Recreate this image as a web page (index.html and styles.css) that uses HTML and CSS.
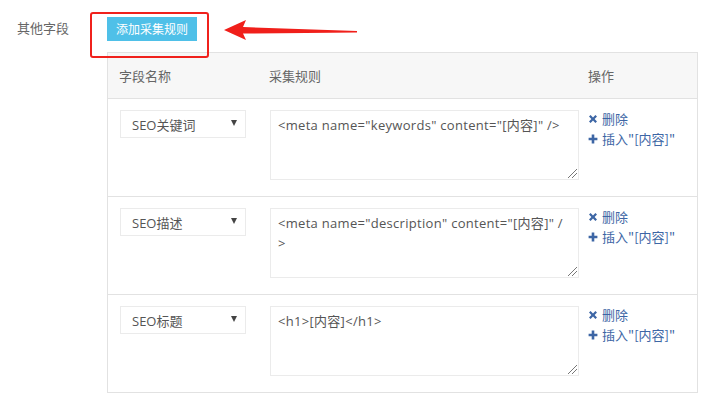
FILE: index.html
```html
<!DOCTYPE html>
<html>
<head>
<meta charset="utf-8">
<link rel="stylesheet" href="styles.css">
</head>
<body>
<div class="form-row">
  <div class="label">其他字段</div>
  <div class="field">
    <div class="btn-line">
      <button class="btn-add">添加采集规则</button>
    </div>
    <div class="rules">
      <div class="row head">
        <div class="cell c1">字段名称</div>
        <div class="cell c2">采集规则</div>
        <div class="cell c3">操作</div>
      </div>
      <div class="row">
        <div class="cell c1"><div class="select"><span>SEO关键词</span><i class="caret"></i></div></div>
        <div class="cell c2"><div class="ta">&lt;meta name="keywords" content="[内容]" /&gt;<i class="grip"></i></div></div>
        <div class="cell c3">
          <a class="act"><svg viewBox="0 0 10 10" class="ic"><path d="M1 2.6 L2.6 1 L5 3.4 L7.4 1 L9 2.6 L6.6 5 L9 7.4 L7.4 9 L5 6.6 L2.6 9 L1 7.4 L3.4 5 Z"/></svg>删除</a>
          <a class="act"><svg viewBox="0 0 10 10" class="ic"><path d="M3.7 0.6 H6.3 V3.7 H9.4 V6.3 H6.3 V9.4 H3.7 V6.3 H0.6 V3.7 H3.7 Z"/></svg>插入"[内容]"</a>
        </div>
      </div>
      <div class="row">
        <div class="cell c1"><div class="select"><span>SEO描述</span><i class="caret"></i></div></div>
        <div class="cell c2"><div class="ta">&lt;meta name="description" content="[内容]" /<br>&gt;<i class="grip"></i></div></div>
        <div class="cell c3">
          <a class="act"><svg viewBox="0 0 10 10" class="ic"><path d="M1 2.6 L2.6 1 L5 3.4 L7.4 1 L9 2.6 L6.6 5 L9 7.4 L7.4 9 L5 6.6 L2.6 9 L1 7.4 L3.4 5 Z"/></svg>删除</a>
          <a class="act"><svg viewBox="0 0 10 10" class="ic"><path d="M3.7 0.6 H6.3 V3.7 H9.4 V6.3 H6.3 V9.4 H3.7 V6.3 H0.6 V3.7 H3.7 Z"/></svg>插入"[内容]"</a>
        </div>
      </div>
      <div class="row">
        <div class="cell c1"><div class="select"><span>SEO标题</span><i class="caret"></i></div></div>
        <div class="cell c2"><div class="ta">&lt;h1&gt;[内容]&lt;/h1&gt;<i class="grip"></i></div></div>
        <div class="cell c3">
          <a class="act"><svg viewBox="0 0 10 10" class="ic"><path d="M1 2.6 L2.6 1 L5 3.4 L7.4 1 L9 2.6 L6.6 5 L9 7.4 L7.4 9 L5 6.6 L2.6 9 L1 7.4 L3.4 5 Z"/></svg>删除</a>
          <a class="act"><svg viewBox="0 0 10 10" class="ic"><path d="M3.7 0.6 H6.3 V3.7 H9.4 V6.3 H6.3 V9.4 H3.7 V6.3 H0.6 V3.7 H3.7 Z"/></svg>插入"[内容]"</a>
        </div>
      </div>
    </div>
  </div>
</div>
<div class="annot-box"></div>
<svg class="annot-arrow" width="150" height="30" viewBox="0 0 150 30">
  <path d="M2 12 L24 2 L21 9 L135 13 L135 14.5 L21 15.5 L24 22 Z" fill="#f01f1a"/>
</svg>
</body>
</html>
```
FILE: styles.css
```css
* { box-sizing: border-box; }
body {
  margin: 0;
  background: #fff;
  font-family: "Open Sans", "Noto Sans CJK SC", sans-serif;
  font-size: 13px;
  color: #555;
  position: relative;
}
.form-row {
  display: flex;
  padding: 16px 18px 0 17px;
}
.label {
  width: 90px;
  flex: none;
  font-size: 13px;
  line-height: 24px;
  color: #666;
  font-family: "Noto Sans CJK SC", sans-serif;
}
.field { flex: 1; }
.btn-line { height: 36px; padding-top: 1px; }
.btn-add {
  display: block;
  height: 24px;
  width: 90px;
  padding: 0;
  border: 0;
  background: #4fc0e8;
  color: #fff;
  font-family: "Noto Sans CJK SC", sans-serif;
  font-size: 12px;
  line-height: 24px;
}
.rules {
  border: 1px solid #e2e2e2;
}
.row {
  display: grid;
  grid-template-columns: 150px 321px 1fr;
  border-top: 1px solid #e2e2e2;
  height: 98px;
}
.row.head {
  border-top: 0;
  height: 45px;
  background: #f7f7f7;
  color: #666;
  align-items: center;
}
.row.head .cell { padding-top: 0; }
.cell { padding: 11px 0 0 12px; }
.c3 { padding-left: 9px; }
.row.head .c1, .row.head .c2 { padding-left: 11px; }
.select {
  width: 126px;
  height: 28px;
  border: 1px solid #ebebeb;
  display: flex;
  align-items: center;
  justify-content: space-between;
  padding: 0 8px 0 11px;
  color: #555;
}
.caret {
  width: 0; height: 0;
  border-left: 3.5px solid transparent;
  border-right: 3.5px solid transparent;
  border-top: 6px solid #444;
  margin-top: -3px;
}
.ta {
  position: relative;
  width: 309px;
  height: 70px;
  border: 1px solid #ebebeb;
  padding: 4px 7px;
  line-height: 20px;
  color: #555;
  font-family: "Open Sans", "Noto Sans CJK SC", sans-serif;
  font-size: 13px;
  letter-spacing: 0.3px;
  white-space: nowrap;
}
.grip {
  position: absolute;
  right: 1px; bottom: 1px;
  width: 9px; height: 9px;
  background: linear-gradient(135deg, transparent 45%, #777 45%, #777 52%, transparent 52%, transparent 70%, #777 70%, #777 77%, transparent 77%);
}
.act {
  display: flex;
  align-items: center;
  color: #3d66a5;
  height: 20px;
  line-height: 20px;
  font-family: "Noto Sans CJK SC", sans-serif;
  font-size: 13px;
}
.act:first-child { margin-top: -1px; }
.ic {
  width: 10px; height: 10px;
  fill: #3d66a5;
  margin-right: 4px;
  flex: none;
}
.annot-box {
  position: absolute;
  left: 90px; top: 12px;
  width: 119px; height: 46px;
  border: 2px solid #f0211c;
  border-radius: 3px;
}
.annot-arrow {
  position: absolute;
  left: 222px; top: 18px;
}
```
